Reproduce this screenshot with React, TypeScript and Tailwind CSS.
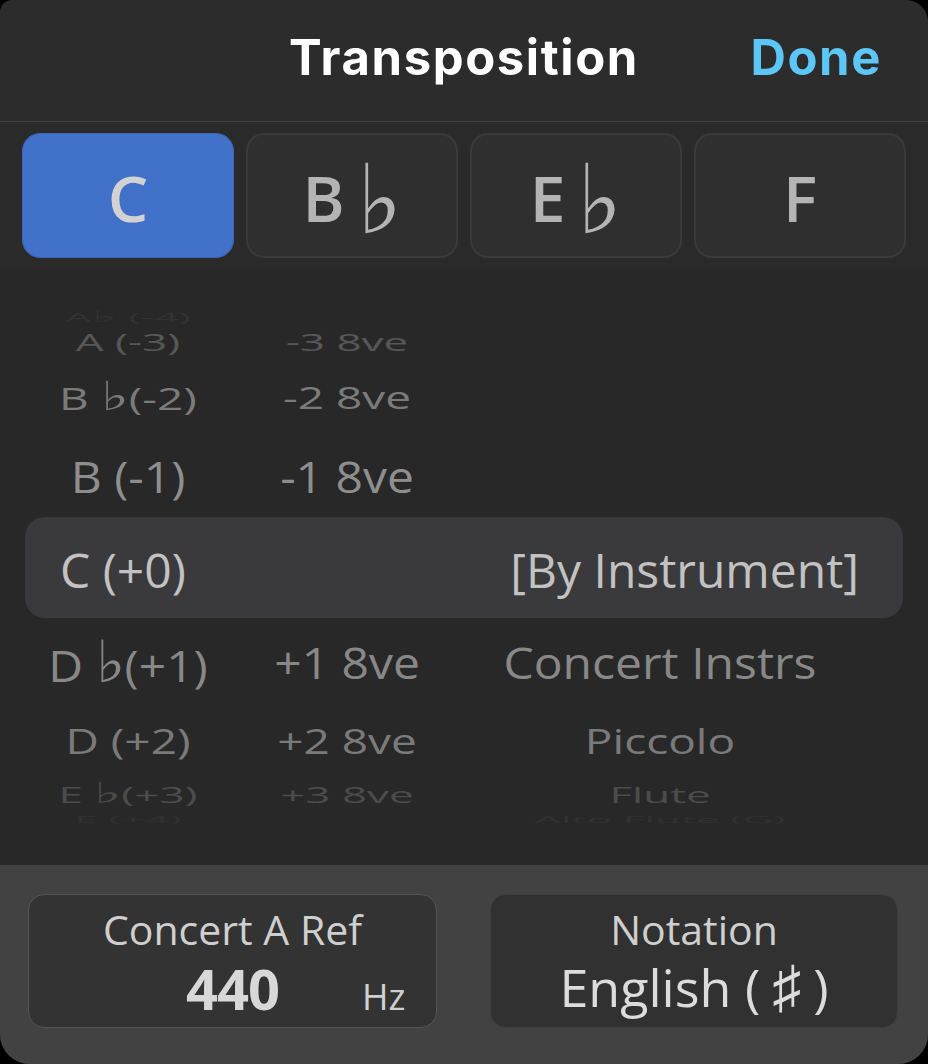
import React from "react";

const OPEN = "font-['Open_Sans',sans-serif]";

function Flat({ className = "" }: { className?: string }) {
  return (
    <span className={`font-['DejaVu_Sans',sans-serif] font-extralight text-[1.3em] leading-none ${className}`}>♭</span>
  );
}

type Row = {
  h: string;
  size: string;
  scale: string;
  color: string;
  c1: React.ReactNode;
  c2?: string;
  c3?: string;
  shift?: string;
};

const rows: Row[] = [
  {
    h: "h-[16px]",
    size: "text-[42px]",
    scale: "scale-y-[0.3]",
    color: "text-[#323232]",
    shift: "translate-y-[-2px]",
    c1: (
      <>
        A<Flat /> (-4)
      </>
    ),
  },
  {
    h: "h-[32px]",
    size: "text-[44px]",
    scale: "scale-y-[0.55]",
    color: "text-[#575757]",
    c1: "A (-3)",
    c2: "-3 8ve",
  },
  {
    h: "h-[78px]",
    size: "text-[46px]",
    scale: "scale-y-[0.67]",
    color: "text-[#7b7b7b]",
    c1: (
      <>
        B <Flat />(-2)
      </>
    ),
    c2: "-2 8ve",
  },
  {
    h: "h-[80px]",
    size: "text-[48px]",
    scale: "scale-y-[0.93]",
    color: "text-[#8e8e8e]",
    c1: "B (-1)",
    c2: "-1 8ve",
  },
];

const rowsBelow: Row[] = [
  {
    h: "h-[88px]",
    size: "text-[48px]",
    scale: "scale-y-[0.93]",
    color: "text-[#888888]",
    c1: (
      <>
        D <Flat />(+1)
      </>
    ),
    c2: "+1 8ve",
    c3: "Concert Instrs",
  },
  {
    h: "h-[68px]",
    size: "text-[46px]",
    scale: "scale-y-[0.76]",
    color: "text-[#7a7a7a]",
    c1: "D (+2)",
    c2: "+2 8ve",
    c3: "Piccolo",
  },
  {
    h: "h-[40px]",
    size: "text-[44px]",
    scale: "scale-y-[0.5]",
    color: "text-[#4c4c4c]",
    c1: (
      <>
        E <Flat />(+3)
      </>
    ),
    c2: "+3 8ve",
    c3: "Flute",
  },
  {
    h: "h-[8px]",
    size: "text-[42px]",
    scale: "scale-y-[0.2]",
    color: "text-[#313131]",
    shift: "translate-y-[2px]",
    c1: "E (+4)",
    c3: "Alto Flute (G)",
  },
];

function PickerRow({ r }: { r: Row }) {
  const t = `inline-block whitespace-nowrap leading-none ${r.size} ${r.scale} ${r.color} ${r.shift ?? ""}`;
  return (
    <div className={`flex items-center pl-[28px] ${r.h} ${OPEN}`}>
      <div className="w-[200px] flex justify-center">
        <span className={t}>{r.c1}</span>
      </div>
      <div className="w-[200px] ml-[19px] flex justify-center">
        {r.c2 ? <span className={t}>{r.c2}</span> : null}
      </div>
      <div className="w-[400px] ml-[13px] flex justify-center">
        {r.c3 ? <span className={t}>{r.c3}</span> : null}
      </div>
    </div>
  );
}

function Seg({ label, flat, selected }: { label: string; flat?: boolean; selected?: boolean }) {
  return (
    <div
      className={`w-[212px] h-[125px] rounded-[18px] flex items-center justify-center pt-[4px] ${
        selected
          ? "bg-[#4271c9] border border-[#3a64b4] text-[#d2d2d2]"
          : "bg-[#2f2f2f] border-2 border-[#3a3a3a] text-[#b4b4b4]"
      }`}
    >
      <span className={`${OPEN} font-semibold text-[64px] leading-none`}>{label}</span>
      {flat ? (
        <span className="font-['DejaVu_Sans',sans-serif] font-extralight text-[96px] leading-none ml-[12px] translate-y-[2px] text-[#b4b4b4]">
          ♭
        </span>
      ) : null}
    </div>
  );
}

export default function App() {
  return (
    <div className="w-[928px] h-[1064px] bg-black">
      <div className="w-full h-full flex flex-col overflow-hidden rounded-tl-[12px] rounded-tr-[22px] rounded-b-[30px] bg-[#2c2c2c]">
        {/* Header */}
        <div className="h-[122px] shrink-0 grid grid-cols-[1fr_auto_1fr] items-start pt-[33px] border-b border-[#3f3f3f] font-['Inter',sans-serif]">
          <div />
          <div className="text-white font-bold text-[49px] leading-none tracking-[1.6px]">Transposition</div>
          <div className="flex justify-end pr-[46px]">
            <span className="text-[#5cc6f7] font-bold text-[49px] leading-none tracking-[1.6px]">Done</span>
          </div>
        </div>

        {/* Segments */}
        <div className="h-[149px] shrink-0 bg-[#2a2a2a] flex gap-[12px] pl-[22px] pt-[11px]">
          <Seg label="C" selected />
          <Seg label="B" flat />
          <Seg label="E" flat />
          <Seg label="F" />
        </div>

        {/* Picker */}
        <div className="h-[594px] shrink-0 bg-[#282828] pt-[39px] flex flex-col overflow-hidden">
          {rows.map((r, i) => (
            <PickerRow key={i} r={r} />
          ))}
          <div className={`mt-[1px] h-[101px] mx-[25px] rounded-[20px] bg-[#3a3a3c] flex items-center justify-between pl-[35px] pr-[44px] pt-[5px] ${OPEN}`}>
            <span className="text-[48px] leading-none text-[#c2c2c2] whitespace-nowrap">C (+0)</span>
            <span className="text-[48px] leading-none text-[#c2c2c2] whitespace-nowrap">[By Instrument]</span>
          </div>
          {rowsBelow.map((r, i) => (
            <PickerRow key={i} r={r} />
          ))}
        </div>

        {/* Bottom bar */}
        <div className={`flex-1 bg-[#424242] flex gap-[53px] pl-[28px] pr-[30px] pt-[29px] ${OPEN}`}>
          <div className="w-[409px] h-[134px] rounded-[16px] bg-[#333333] border border-[#555555] flex flex-col items-center">
            <div className="mt-[14px] text-[41px] leading-none text-[#cfcfcf] whitespace-nowrap">Concert A Ref</div>
            <div className="w-full mt-[10px] grid grid-cols-[1fr_auto_1fr] items-baseline">
              <div />
              <div className="text-[56px] font-bold leading-none text-[#d8d8d8] tracking-[-1px]">440</div>
              <div className="pl-[83px] text-[36px] leading-none text-[#cfcfcf]">Hz</div>
            </div>
          </div>
          <div className="w-[408px] h-[134px] rounded-[16px] bg-[#313131] border border-[#3d3d3d] flex flex-col items-center">
            <div className="mt-[14px] text-[41px] leading-none text-[#cfcfcf] whitespace-nowrap">Notation</div>
            <div className="mt-[8px] text-[52px] leading-none text-[#dcdcdc] whitespace-nowrap">
              English (
              <span className="font-['DejaVu_Sans',sans-serif] font-extralight text-[58px] mx-[12px]">♯</span>)
            </div>
          </div>
        </div>
      </div>
    </div>
  );
}
